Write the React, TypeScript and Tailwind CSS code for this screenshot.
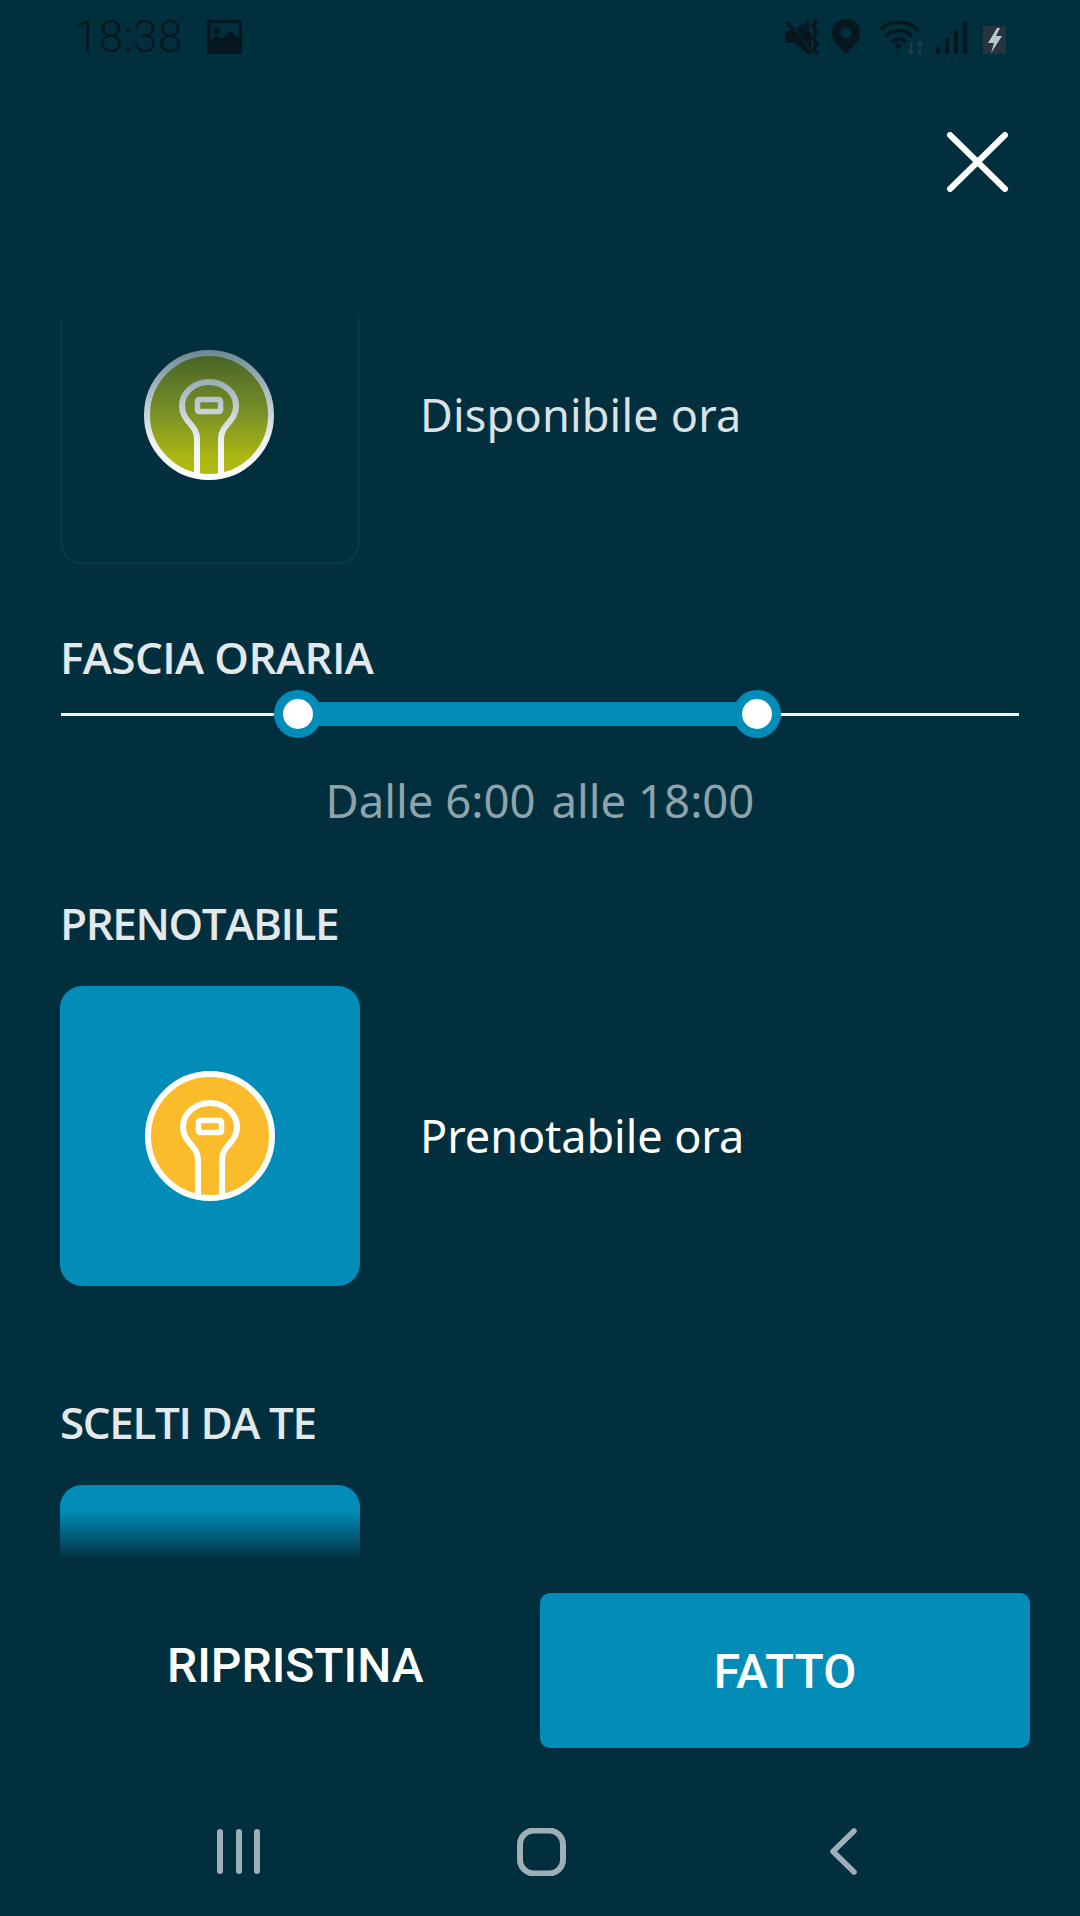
import React from "react";

function Bulb({ id, muted }: { id: string; muted?: boolean }) {
  const stroke = muted ? `url(#${id}s)` : "#ffffff";
  const fill = muted ? `url(#${id}f)` : "#fabc2a";
  return (
    <svg width="134" height="134" viewBox="-67 -67 134 134">
      {muted && (
        <defs>
          <linearGradient id={`${id}s`} gradientUnits="userSpaceOnUse" x1="0" y1="-65" x2="0" y2="65">
            <stop offset="0" stopColor="#6c8893" />
            <stop offset="0.35" stopColor="#b0c0c6" />
            <stop offset="0.7" stopColor="#eef2f3" />
            <stop offset="1" stopColor="#ffffff" />
          </linearGradient>
          <linearGradient id={`${id}f`} gradientUnits="userSpaceOnUse" x1="0" y1="-62" x2="0" y2="62">
            <stop offset="0" stopColor="#456328" />
            <stop offset="0.5" stopColor="#7c9126" />
            <stop offset="0.85" stopColor="#adb812" />
            <stop offset="1" stopColor="#b2bb10" />
          </linearGradient>
        </defs>
      )}
      <circle cx="0" cy="0" r="62" fill={fill} stroke={stroke} strokeWidth="6" />
      <path
        d="M-12 60V24C-12 9-27 7-27-9A27 24 0 0 1 27-9C27 7 12 9 12 24V60"
        fill="none"
        stroke={stroke}
        strokeWidth="6"
      />
      <rect x="-11.5" y="-15.5" width="23" height="12" rx="1.5" fill="none" stroke={stroke} strokeWidth="5.5" />
    </svg>
  );
}

function StatusIcons() {
  const c = "#07171f";
  return (
    <div className="flex items-center">
      <svg width="222" height="40" viewBox="786 16 222 40" className="block">
        {/* muted / vibrate */}
        <path d="M786 30h8l9-7 9 9v21l-3 0-14-11h-9z" fill={c} />
        <path d="M789 20l22 30" stroke="#012f3d" strokeWidth="3" />
        <path d="M788 21l23 32" stroke={c} strokeWidth="4" />
        <path d="M804 25l6-6v10z" fill={c} />
        <path d="M818 19l-4 6 4 6-4 6 4 6-4 6 5 4" fill="none" stroke={c} strokeWidth="3.5" />
        {/* location */}
        <path
          fillRule="evenodd"
          d="M847 18a14 14 0 0 1 14 14c0 9-9 15-14 21-5-6-14-12-14-21a14 14 0 0 1 14-14zm0 8.500a5.500 5.500 0 1 0 0 11 5.500 5.500 0 0 0 0-11z"
          fill={c}
        />
        {/* wifi */}
        <path d="M881 29a27 27 0 0 1 38 0" fill="none" stroke={c} strokeWidth="3.500" />
        <path d="M887 35a18 18 0 0 1 26 0" fill="none" stroke={c} strokeWidth="3.500" />
        <path d="M893 41a10 10 0 0 1 14 0" fill="none" stroke={c} strokeWidth="3.500" />
        <circle cx="899" cy="45" r="2.800" fill={c} />
        <path d="M911 41v8h-3l4 5 4-5h-3v-8z" fill="#1b3a44" />
        <path d="M922 54v-9h3l-4-6-4 6h3v9z" fill="#1b3a44" />
        {/* signal */}
        <rect x="937" y="46" width="4" height="7" rx="1" fill={c} />
        <rect x="946" y="37" width="4" height="16" rx="1" fill={c} />
        <rect x="955" y="28" width="4" height="25" rx="1" fill={c} />
        <rect x="964" y="20" width="4" height="33" rx="1" fill={c} />
        {/* battery */}
        <rect x="984" y="25" width="23" height="28" fill="#26363c" />
        <path d="M998 27l-9 15h6l-3 10 11-17h-6l4-8z" fill="#b9c8cd" />
      </svg>
    </div>
  );
}

function ImageIcon() {
  return (
    <svg width="35" height="34" viewBox="0 0 35 34" className="block">
      <path
        fillRule="evenodd"
        d="M2 0h31a2 2 0 0 1 2 2v30a2 2 0 0 1-2 2H2a2 2 0 0 1-2-2V2a2 2 0 0 1 2-2zm1.500 3v17l6-5 5 4 9-8 8 7V3zM10 7a3.500 3.500 0 1 0 0 7 3.500 3.500 0 0 0 0-7z"
        fill="#07171f"
      />
    </svg>
  );
}

function Heading({ children, narrow }: { children: React.ReactNode; narrow?: boolean }) {
  return (
    <div
      className={
        narrow
          ? "ml-[60px] h-[60px] leading-[58px] text-[44px] font-semibold tracking-[-1.4px] text-[#e3e8eb] font-['Open_Sans',sans-serif] whitespace-nowrap"
          : "ml-[60px] h-[60px] leading-[58px] text-[44px] font-semibold tracking-[-0.6px] text-[#e3e8eb] font-['Open_Sans',sans-serif] whitespace-nowrap"
      }
    >
      {children}
    </div>
  );
}

function Thumb() {
  return (
    <div className="w-12 h-12 shrink-0 rounded-full bg-[#018db8] flex items-center justify-center">
      <div className="relative z-10 w-[30px] h-[30px] rounded-full bg-white" />
    </div>
  );
}

export default function App() {
  return (
    <div className="w-[1080px] h-[1916px] overflow-hidden bg-[#012f3d] flex flex-col font-['Lato',sans-serif]">
      {/* status bar */}
      <div className="h-[72px] shrink-0 flex items-center justify-between pl-[74px] pr-[73px] pt-[2px]">
        <div className="flex items-center gap-[24px]">
          <span className="text-[44px] leading-[44px] tracking-[0.4px] font-light text-[#07171f] font-['Roboto',sans-serif]">18:38</span>
          <ImageIcon />
        </div>
        <StatusIcons />
      </div>

      {/* close */}
      <div className="h-[193px] shrink-0 flex justify-end pt-[60px] pr-[71px]">
        <svg width="63" height="60" viewBox="0 0 63 60" className="block">
          <path d="M4 3L59 57M59 3L4 57" stroke="#ffffff" strokeWidth="6" strokeLinecap="round" fill="none" />
        </svg>
      </div>

      {/* scrolling list */}
      <div className="relative h-[1295px] shrink-0 overflow-hidden">
        <div className="flex items-center">
          <div className="ml-[60px] w-[300px] h-[300px] shrink-0 rounded-[22px] border-[3px] border-[#053a47] flex items-center justify-center pr-[2px]">
            <Bulb id="a" muted />
          </div>
          <span className="ml-[60px] text-[45px] leading-[60px] tracking-[0.2px] text-[#dbe2e5] font-['Noto_Sans',sans-serif]">Disponibile ora</span>
        </div>

        <div className="mt-[63px]">
          <Heading>FASCIA ORARIA</Heading>
        </div>

        <div className="mt-[2px] ml-[61px] w-[958px] h-12 flex items-center">
          <div className="w-[213px] h-[3px] bg-[#f2f5f6]" />
          <Thumb />
          <div className="w-[419px] h-6 bg-[#018db8] -mx-[4px]" />
          <Thumb />
          <div className="flex-1 h-[3px] bg-[#f2f5f6]" />
        </div>

        <div className="mt-[32px] h-[60px] leading-[60px] flex justify-center gap-[16px] text-[45.500px] text-[#8ea3ab] font-['Noto_Sans',sans-serif] whitespace-nowrap">
          <span>Dalle 6:00</span>
          <span>alle 18:00</span>
        </div>

        <div className="mt-[64px]">
          <Heading narrow>PRENOTABILE</Heading>
        </div>

        <div className="mt-[32px] flex items-center">
          <div className="ml-[60px] w-[300px] h-[300px] shrink-0 rounded-[22px] bg-[#018db8] flex items-center justify-center">
            <Bulb id="b" />
          </div>
          <span className="ml-[60px] text-[45px] leading-[60px] tracking-[-0.05px] text-white font-['Noto_Sans',sans-serif]">Prenotabile ora</span>
        </div>

        <div className="mt-[107px]">
          <Heading narrow>SCELTI DA TE</Heading>
        </div>

        <div className="mt-[32px] ml-[60px] w-[300px] h-[300px] rounded-[22px] bg-[#018db8]" />

        {/* fades over the clipped list */}
        <div className="absolute left-0 right-0 top-0 h-[62px] bg-gradient-to-b from-[#012f3d] from-[70%] to-transparent" />
        <div className="absolute left-0 right-0 bottom-0 h-[50px] bg-gradient-to-t from-[#012f3d] to-transparent" />
      </div>

      {/* actions */}
      <div className="mt-[33px] h-[155px] shrink-0 flex">
        <div className="w-[540px] h-full flex justify-start pl-[167px] pt-[40px]">
          <span className="text-[48px] leading-[66px] font-medium text-white font-['Roboto',sans-serif]">RIPRISTINA</span>
        </div>
        <div className="w-[490px] h-full rounded-[10px] bg-[#018db8] flex items-center justify-center pt-[3px]">
          <span className="text-[48px] leading-[66px] font-medium text-white font-['Roboto',sans-serif]">FATTO</span>
        </div>
      </div>

      {/* navigation */}
      <div className="mt-[80px] h-[48px] shrink-0 relative">
        <svg width="1080" height="48" viewBox="0 1828 1080 48" className="block">
          <g fill="#9eb0b5">
            <rect x="217" y="1829" width="6" height="45" rx="3" />
            <rect x="236" y="1829" width="6" height="45" rx="3" />
            <rect x="254" y="1829" width="6" height="45" rx="3" />
          </g>
          <rect x="520" y="1830.500" width="43" height="43" rx="14" fill="none" stroke="#9eb0b5" strokeWidth="6" />
          <path d="M854 1831L833 1851.500 854 1872" fill="none" stroke="#9eb0b5" strokeWidth="5.500" strokeLinecap="round" strokeLinejoin="round" />
        </svg>
      </div>
    </div>
  );
}
